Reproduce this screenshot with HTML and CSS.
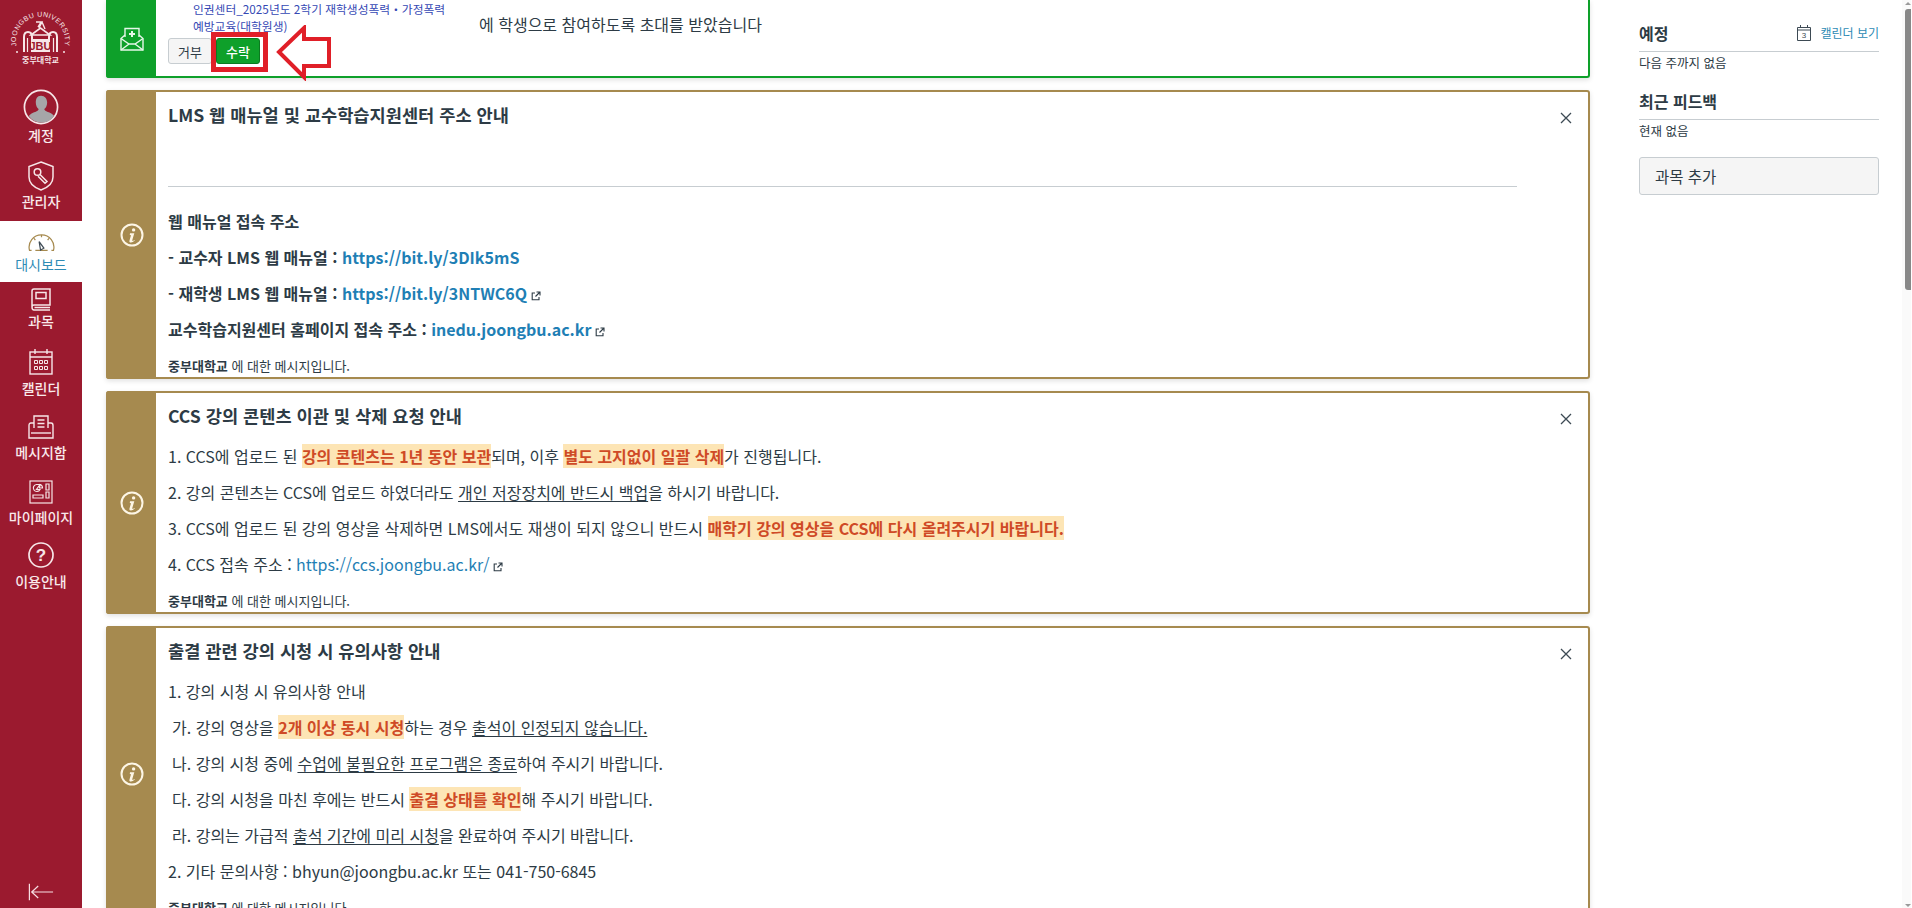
FILE: index.html
```html
<!DOCTYPE html>
<html lang="ko">
<head>
<meta charset="utf-8">
<title>대시보드</title>
<link rel="stylesheet" href="styles.css">
</head>
<body>
<svg class="defs" width="0" height="0" aria-hidden="true">
  <defs>
    <symbol id="ext" viewBox="0 0 10 10">
      <path d="M4 2H1.2v6.8H8V6M5.5 1h3.5v3.500M9 1 4.500 5.500" fill="none" stroke="currentColor" stroke-width="1.100"/>
    </symbol>
    <symbol id="info" viewBox="0 0 24 24">
      <circle cx="12" cy="12" r="10.500" fill="none" stroke="#fdf6e6" stroke-width="2"/>
      <circle cx="13.600" cy="6.900" r="1.700" fill="#fdf6e6"/>
      <path d="M10 10.300h4.300l-2 6.700q-.2.900.6.900l1.600-.9.300.6q-2.200 2-3.800 2-2.100 0-1.500-2.100l1.500-5.300-1.200-.3z" fill="#fdf6e6"/>
    </symbol>
    <symbol id="close" viewBox="0 0 12 12">
      <path d="M1 1l10 10M11 1 1 11" fill="none" stroke="#3d4a54" stroke-width="1.300"/>
    </symbol>
  </defs>
</svg>

<nav class="sidebar">
  <div class="logo">
    <svg width="82" height="82" viewBox="0 0 82 82">
      <defs><path id="arc" d="M16.500 46A24.500 24.500 0 1 1 64.500 46"/></defs>
      <text class="logo-ring"><textPath href="#arc" textLength="86">JOONGBU UNIVERSITY</textPath></text>
      <circle cx="17" cy="52" r="1" fill="#f7e6e8"/><circle cx="64" cy="52" r="1" fill="#f7e6e8"/>
      <path d="M24 52V37q0-5 4-5t4 5V52M57 52V37q0-5-4-5t-4 5V52" fill="none" stroke="#f7e6e8" stroke-width="2"/>
      <path d="M27.500 52V38M53.500 52V38" stroke="#f7e6e8" stroke-width="1.200"/>
      <path d="M31 35 40.500 28l9.500 7H31z" fill="none" stroke="#f7e6e8" stroke-width="1.600"/>
      <path d="M36 22h6l-3 6M42 22l3 7M38 27l3-5" fill="none" stroke="#f7e6e8" stroke-width="1.400"/>
      <rect x="31" y="39" width="19" height="13" fill="#f7e6e8"/>
      <text class="logo-jbu" x="40.500" y="50">JBU</text>
      <text class="logo-kr" x="40.500" y="63">중부대학교</text>
    </svg>
  </div>
  <div class="nav-items">
    <a class="nav-item is-tight">
      <svg class="nav-icon" width="36" height="36" viewBox="0 0 38 38">
        <circle cx="19" cy="19" r="17.500" fill="#9b1a2f" stroke="#f7e6e8" stroke-width="1.800"/>
        <path d="M19 7c4.200 0 6.500 3.200 6.500 7.200 0 3.100-1.300 5.600-3 7 .1 1.200 1 2 3 2.700 3.400 1.200 6 2.300 7.400 4.700A16.500 16.500 0 0 1 19 35.500 16.500 16.500 0 0 1 6.100 28.600c1.400-2.400 4-3.500 7.400-4.700 2-.7 2.900-1.500 3-2.700-1.700-1.400-3-3.900-3-7C13.500 10.200 14.800 7 19 7z" fill="#a6a6a8"/>
      </svg>
      <span class="nav-label">계정</span>
    </a>
    <a class="nav-item is-tight">
      <svg class="nav-icon" width="26" height="30" viewBox="0 0 26 30" fill="none" stroke="#f7e6e8" stroke-width="1.500">
        <path d="M13 1 25 5.500V16c0 6-5 10.500-12 13C6 26.500 1 22 1 16V5.500z"/>
        <circle cx="9.500" cy="11" r="3.300"/>
        <path d="M12 13.500 19 20.500l-2 1.800-7-7"/>
      </svg>
      <span class="nav-label">관리자</span>
    </a>
    <a class="nav-item is-active">
      <svg class="nav-icon" width="27" height="17" viewBox="0 0 28 18" fill="none" stroke="#a68a4f" stroke-width="1.300">
        <path d="M3.500 17.300H1.300A13 13 0 0 1 14 1a13 13 0 0 1 12.700 16.300h-2.200M7.500 17.300h13"/>
        <path d="M11.500 8l5 7-3.500 2z" stroke="#3d4a54"/>
        <path d="M14 1v2.500M6 4.500l1.500 2M22 4.500l-1.500 2" />
      </svg>
      <span class="nav-label">대시보드</span>
    </a>
    <a class="nav-item is-tight">
      <svg class="nav-icon" width="20" height="23" viewBox="0 0 20 23" fill="none" stroke="#f7e6e8" stroke-width="1.500">
        <path d="M1 19V3q0-2 2-2h16v16H3q-2 0-2 2 0 3 2 3h16"/>
        <rect x="5" y="4.500" width="10" height="6"/>
        <path d="M3.500 19.500H19"/>
      </svg>
      <span class="nav-label">과목</span>
    </a>
    <a class="nav-item">
      <svg class="nav-icon" width="24" height="26" viewBox="0 0 24 26" fill="none" stroke="#f7e6e8" stroke-width="1.400">
        <rect x="1" y="3" width="22" height="22"/>
        <path d="M1 8h22M6 0v5M18 0v5"/>
        <path d="M5.500 11.500h3v3h-3zM10.500 11.500h3v3h-3zM15.500 11.500h3v3h-3zM5.500 17.500h3v3h-3zM10.500 17.500h3v3h-3zM15.500 17.500h3v3h-3z" stroke-width="1"/>
      </svg>
      <span class="nav-label">캘린더</span>
    </a>
    <a class="nav-item">
      <svg class="nav-icon" width="26" height="24" viewBox="0 0 26 24" fill="none" stroke="#f7e6e8" stroke-width="1.400">
        <path d="M6 13V1h14v12"/>
        <path d="M9.500 5h7M9.500 8.500h7M9.500 12h7"/>
        <path d="M6 8H3Q1 8 1 10.500V23h24V10.500Q25 8 23 8h-3"/>
        <path d="M3 18h20"/>
      </svg>
      <span class="nav-label">메시지함</span>
    </a>
    <a class="nav-item">
      <svg class="nav-icon" width="24" height="24" viewBox="0 0 24 24" fill="none" stroke="#f7e6e8" stroke-width="1.200">
        <rect x="1" y="1" width="22" height="22"/>
        <path d="M11 4.500H7.500A3.500 3.500 0 1 0 11 9.500H7.500z"/>
        <path d="M11 4.500A3.500 3.500 0 0 1 13.500 8H10.500z"/>
        <path d="M17 4h3v6h-3zM17 12h3v6h-3zM4 15h10v3H4z"/>
      </svg>
      <span class="nav-label">마이페이지</span>
    </a>
    <a class="nav-item">
      <svg class="nav-icon" width="26" height="26" viewBox="0 0 26 26">
        <circle cx="13" cy="13" r="12" fill="none" stroke="#f7e6e8" stroke-width="1.700"/>
        <text class="help-mark" x="13" y="18.500">?</text>
      </svg>
      <span class="nav-label">이용안내</span>
    </a>
  </div>
  <div class="collapse">
    <svg width="26" height="18" viewBox="0 0 28 18" fill="none" stroke="#f7dfe3" stroke-width="1.300">
      <path d="M1.500 0v18M27 9H4M11 2.500 4 9l7 6.500"/>
    </svg>
  </div>
</nav>

<main class="dashboard">
  <section class="card card-success">
    <div class="band band-success">
      <svg width="24" height="24" viewBox="0 0 24 24" fill="none" stroke="#e6f7e9" stroke-width="1.400">
        <path d="M5 10V1.500h14V10"/>
        <path d="M12 4v6M9 7h6" stroke-width="2"/>
        <path d="M5 8 1 11.500V23h22V11.500L19 8"/>
        <path d="M1 11.500 9 17h6l8-5.500M1 23l8-6M23 23l-8-6"/>
      </svg>
    </div>
    <div class="invite">
      <div class="invite-row">
        <a class="invite-link">인권센터_2025년도 2학기 재학생성폭력・가정폭력<br>예방교육(대학원생)</a>
        <span class="invite-text">에 학생으로 참여하도록 초대를 받았습니다</span>
      </div>
      <div class="invite-actions">
        <button class="btn">거부</button>
        <span class="mark-box"><button class="btn btn-accept">수락</button></span>
        <svg class="mark-arrow" width="56" height="56" viewBox="0 0 56 56">
          <path d="M3 27 28 3v11h25v27H28v11z" fill="#fff" stroke="#e01f28" stroke-width="4"/>
        </svg>
      </div>
    </div>
  </section>

  <section class="card">
    <div class="band"><svg width="24" height="24"><use href="#info"/></svg></div>
    <div class="card-body">
      <svg class="close" width="12" height="12"><use href="#close"/></svg>
      <h2 class="card-title">LMS 웹 매뉴얼 및 교수학습지원센터 주소 안내</h2>
      <hr class="rule">
      <p class="strong">웹 매뉴얼 접속 주소</p>
      <p class="strong">- 교수자 LMS 웹 매뉴얼 : <a class="link">https://bit.ly/3DIk5mS</a></p>
      <p class="strong">- 재학생 LMS 웹 매뉴얼 : <a class="link">https://bit.ly/3NTWC6Q</a><svg class="ext" width="10" height="10"><use href="#ext"/></svg></p>
      <p class="strong">교수학습지원센터 홈페이지 접속 주소 : <a class="link">inedu.joongbu.ac.kr</a><svg class="ext" width="10" height="10"><use href="#ext"/></svg></p>
      <div class="card-foot"><b>중부대학교</b> 에 대한 메시지입니다.</div>
    </div>
  </section>

  <section class="card">
    <div class="band"><svg width="24" height="24"><use href="#info"/></svg></div>
    <div class="card-body">
      <svg class="close" width="12" height="12"><use href="#close"/></svg>
      <h2 class="card-title">CCS 강의 콘텐츠 이관 및 삭제 요청 안내</h2>
      <p>1. CCS에 업로드 된 <mark>강의 콘텐츠는 1년 동안 보관</mark>되며, 이후 <mark>별도 고지없이 일괄 삭제</mark>가 진행됩니다.</p>
      <p>2. 강의 콘텐츠는 CCS에 업로드 하였더라도 <u>개인 저장장치에 반드시 백업</u>을 하시기 바랍니다.</p>
      <p>3. CCS에 업로드 된 강의 영상을 삭제하면 LMS에서도 재생이 되지 않으니 반드시 <mark>매학기 강의 영상을 CCS에 다시 올려주시기 바랍니다.</mark></p>
      <p>4. CCS 접속 주소 : <a class="link-plain">https://ccs.joongbu.ac.kr/</a><svg class="ext" width="10" height="10"><use href="#ext"/></svg></p>
      <div class="card-foot"><b>중부대학교</b> 에 대한 메시지입니다.</div>
    </div>
  </section>

  <section class="card">
    <div class="band"><svg width="24" height="24"><use href="#info"/></svg></div>
    <div class="card-body">
      <svg class="close" width="12" height="12"><use href="#close"/></svg>
      <h2 class="card-title">출결 관련 강의 시청 시 유의사항 안내</h2>
      <p>1. 강의 시청 시 유의사항 안내</p>
      <p class="sub">가. 강의 영상을 <mark>2개 이상 동시 시청</mark>하는 경우 <u>출석이 인정되지 않습니다.</u></p>
      <p class="sub">나. 강의 시청 중에 <u>수업에 불필요한 프로그램은 종료</u>하여 주시기 바랍니다.</p>
      <p class="sub">다. 강의 시청을 마친 후에는 반드시 <mark>출결 상태를 확인</mark>해 주시기 바랍니다.</p>
      <p class="sub">라. 강의는 가급적 <u>출석 기간에 미리 시청</u>을 완료하여 주시기 바랍니다.</p>
      <p>2. 기타 문의사항 : bhyun@joongbu.ac.kr 또는 041-750-6845</p>
      <div class="card-foot"><b>중부대학교</b> 에 대한 메시지입니다.</div>
    </div>
  </section>
</main>

<aside class="side">
  <div class="side-head">
    <h3 class="side-title">예정</h3>
    <a class="side-link">
      <svg width="14" height="16" viewBox="0 0 14 16">
        <path d="M.5 2.500h13v13H.5zM.5 5h13M3.500 0v3M10.500 0v3" fill="none" stroke="#3d4a54"/>
        <text class="cal-num" x="7" y="13">3</text>
      </svg>
      <span>캘린더 보기</span>
    </a>
  </div>
  <p class="side-note">다음 주까지 없음</p>
  <div class="side-head side-head-next">
    <h3 class="side-title">최근 피드백</h3>
  </div>
  <p class="side-note">현재 없음</p>
  <button class="side-btn">과목 추가</button>
</aside>

<div class="scrollbar">
  <span class="scroll-up"></span>
  <span class="scroll-thumb"></span>
  <span class="scroll-down"></span>
</div>
</body>
</html>
```

FILE: styles.css
```css
* { box-sizing: border-box; }
html, body { margin: 0; height: 100%; }
body {
  display: flex;
  height: 908px;
  overflow: hidden;
  background: #fff;
  color: #2d3b45;
  font-family: "Noto Sans CJK KR", "Noto Sans", sans-serif;
  font-size: 16px;
}
.defs { position: absolute; }
a { color: inherit; text-decoration: none; }

/* sidebar */
.sidebar {
  flex: 0 0 82px;
  display: flex;
  flex-direction: column;
  background: #9b1a2f;
  color: #f9e9eb;
}
.logo { height: 85px; }
.logo svg { display: block; }
.logo-ring { font: 400 7px "Liberation Sans", sans-serif; fill: #f7e6e8; }
.logo-jbu { font: 700 11px "Liberation Sans", sans-serif; fill: #9b1a2f; text-anchor: middle; }
.logo-kr { font: 700 8px "Noto Sans CJK KR", sans-serif; fill: #f7e6e8; text-anchor: middle; }
.nav-items {
  display: grid;
  grid-template-rows: 70px 66px 61px 59px 66px 64px 65px 64px;
}
.nav-item {
  display: flex;
  flex-direction: column;
  align-items: center;
  justify-content: flex-end;
  gap: 3px;
  padding-bottom: 9px;
}
.is-tight { gap: 0; padding-bottom: 10px; }
.nav-icon { display: block; }
.nav-label { font-size: 14px; line-height: 20px; font-weight: 500; }
.is-active { background: #fff; color: #2d8bb5; padding-bottom: 8px; }
.is-active .nav-label { font-weight: 400; }
.help-mark { font: 700 17px "Liberation Sans", sans-serif; fill: #f7e6e8; text-anchor: middle; }
.collapse { margin-top: auto; height: 25px; display: flex; justify-content: center; }

/* main column */
.dashboard {
  flex: 0 0 1484px;
  margin-left: 24px;
  display: flex;
  flex-direction: column;
  gap: 12px;
  min-height: 0;
}
.card {
  flex: none;
  display: flex;
  background: #fff;
  border: 2px solid #a68a4f;
  border-width: 2px 2px 2px 0;
  border-radius: 3px;
  box-shadow: 0 2px 5px rgba(0, 0, 0, .12);
}
.band {
  flex: 0 0 50px;
  display: flex;
  align-items: center;
  justify-content: center;
  padding-left: 1px;
  background: #a68a4f;
  margin: -2px 0;
  border-radius: 3px 0 0 3px;
}
.card-body { position: relative; flex: 1; padding: 0 71px 0 12px; min-width: 0; }
.card-title { margin: 9px 0 15px; font-size: 17.600px; line-height: 27px; font-weight: 700; }
.close { position: absolute; top: 20px; right: 16px; display: block; }
.card p { margin: 0 0 12px; line-height: 24px; white-space: nowrap; }
.card .sub { padding-left: 4px; }
.strong { font-weight: 700; }
.rule { margin: 58px 0 22px; border: 0; border-top: 1px solid #c7cdd1; }
.link { color: #1f7fb5; font-weight: 700; }
.link-plain { color: #1f7fb5; }
.ext { margin-left: 4px; color: #2d3b45; vertical-align: -1px; }
mark { background: #fde5b5; color: #cf4a26; font-weight: 700; }
u { text-underline-offset: 2px; }
.card-foot { font-size: 13px; line-height: 18px; margin-top: 16px; padding-bottom: 2px; }
.card-foot b { font-weight: 700; }

/* invitation card */
.card-success { border: 0; border-bottom: 2px solid #0ea02a; border-right: 2px solid #0ea02a; height: 78px; border-radius: 0 0 3px 3px; }
.band-success { background: #0ea02a; margin: 0 0 -2px; border-radius: 0 0 0 3px; }
.invite { flex: 1; padding-left: 12px; min-width: 0; }
.invite-row { display: flex; height: 38px; }
.invite-link {
  width: 286px;
  margin-left: 25px;
  font-size: 11.750px;
  line-height: 17px;
  color: #3548b4;
  white-space: nowrap;
}
.invite-text { padding-top: 12px; line-height: 24px; }
.invite-actions { position: relative; display: flex; gap: 4px; }
.btn {
  width: 44px;
  height: 26px;
  padding: 0;
  background: #f5f5f5;
  border: 1px solid #c7cdd1;
  border-radius: 3px;
  color: #2d3b45;
  font: 400 13px "Noto Sans CJK KR", sans-serif;
}
.btn-accept { display: block; background: #0ea02a; border-color: #0b7a20; color: #fff; font-weight: 500; }
.mark-box {
  position: absolute;
  left: 43px;
  top: -6px;
  width: 57px;
  height: 40px;
  padding-top: 1px;
  border: 5px solid #e01f28;
}
.mark-arrow { position: absolute; left: 108px; top: -13px; }

/* right column */
.side { flex: 0 0 240px; margin-left: 49px; padding-top: 20px; }
.side-head {
  display: flex;
  align-items: center;
  justify-content: space-between;
  height: 32px;
  padding-bottom: 6px;
  border-bottom: 1px solid #c7cdd1;
}
.side-head-next { margin-top: 16px; }
.side-title { margin: 0; font-size: 16px; font-weight: 700; line-height: 24px; }
.side-link { display: flex; align-items: center; gap: 9px; color: #2d8bb5; font-size: 12px; line-height: 18px; }
.cal-num { font: 400 8px "Liberation Sans", sans-serif; fill: #3d4a54; text-anchor: middle; }
.side-note { margin: 1px 0 0; font-size: 12.500px; line-height: 19px; }
.side-btn {
  display: block;
  width: 240px;
  height: 38px;
  margin-top: 17px;
  padding: 0 0 0 15px;
  text-align: left;
  background: #f5f5f5;
  border: 1px solid #c7cdd1;
  border-radius: 3px;
  color: #2d3b45;
  font: 400 15.500px "Noto Sans CJK KR", sans-serif;
}

/* scrollbar */
.scrollbar {
  flex: 0 0 9px;
  margin-left: 23px;
  display: flex;
  flex-direction: column;
  align-items: flex-end;
  background: #fafafa;
}
.scroll-up, .scroll-down { width: 0; height: 0; border: 3px solid transparent; margin-right: 0; }
.scroll-up { border-bottom-color: #9a9a9a; border-top-width: 0; margin-top: 2px; }
.scroll-down { border-top-color: #9a9a9a; border-bottom-width: 0; margin-top: auto; margin-bottom: 1px; }
.scroll-thumb { width: 6px; height: 281px; margin-top: 4px; background: #888; border-radius: 3px 0 0 3px; }
```
